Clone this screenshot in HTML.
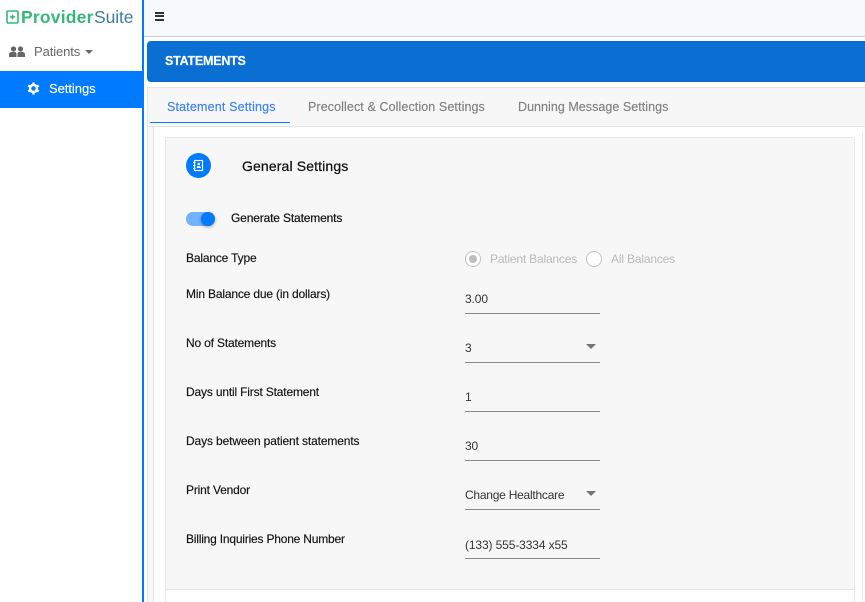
<!DOCTYPE html>
<html><head><meta charset="utf-8"><style>
html,body{margin:0;padding:0;background:#fff}
#r{position:relative;width:865px;height:602px;overflow:hidden;background:#fff;font-family:"Liberation Sans",sans-serif;font-size:12px;color:#212529}
#r div{position:absolute;white-space:nowrap}
.l{left:186px;color:#111;font-size:12px;line-height:14px;letter-spacing:-.17px;-webkit-text-stroke:.15px #111}
.v{left:465px;color:#333;font-size:12px;line-height:14px;letter-spacing:-.12px}
.u{left:465px;width:135px;height:1px;background:#8a8a8a}
.c{left:586px;width:0;height:0;border-left:5.5px solid transparent;border-right:5.5px solid transparent;border-top:5px solid #757575}
.t{font-size:12.5px;line-height:15px;top:100px;-webkit-text-stroke:.15px currentColor}
</style></head><body><div id="r">
<div style="left:142px;top:0;width:2px;height:602px;background:#007bff"></div>
<div style="left:144px;top:0;width:721px;height:36px;background:#f8f9fa"></div>
<div style="left:144px;top:36px;width:721px;height:1px;background:#ccc"></div>
<svg style="position:absolute;left:6px;top:10px" width="14" height="14" viewBox="0 0 14 14"><rect x="1" y="1" width="11" height="12" rx="1" fill="none" stroke="#35b87a" stroke-width="1.6"/><path d="M6.500 4.500v5M4 7h5" stroke="#35b87a" stroke-width="1.400"/></svg>
<div style="left:21px;top:7px;font-size:17.5px;line-height:20px;font-weight:bold;color:#35b87a;letter-spacing:.2px">Provider</div>
<div style="left:94px;top:7px;font-size:17.5px;line-height:20px;color:#3f7d9b;letter-spacing:-.1px">Suite</div>
<svg style="position:absolute;left:9px;top:46px" width="16" height="12" viewBox="0 0 16 12"><circle cx="4.500" cy="3" r="2.600" fill="#666"/><circle cx="11.500" cy="3" r="2.600" fill="#666"/><path d="M0 11V8.500Q0 6 3 6H6Q7.300 6 7.500 8V11ZM8.500 11V8Q8.700 6 10 6H13Q16 6 16 8.500V11Z" fill="#666"/></svg>
<div style="left:34px;top:44px;font-size:13px;line-height:15px;color:#666;letter-spacing:-.1px">Patients</div>
<div style="left:85px;top:50px;width:0;height:0;border-left:4.500px solid transparent;border-right:4.500px solid transparent;border-top:4.500px solid #666"></div>
<div style="left:0;top:71px;width:142px;height:37px;background:#007bff"></div>
<svg style="position:absolute;left:27px;top:82px" width="13" height="13" viewBox="0 0 13 13"><circle cx="6.500" cy="6.500" r="3.500" fill="none" stroke="#fff" stroke-width="2.400"/><path d="M6.500 0.500v2.500M6.500 10v2.500M1.300 3.500l2.200 1.300M9.500 8.200l2.200 1.300M1.300 9.500l2.200-1.300M9.500 4.800l2.200-1.300" stroke="#fff" stroke-width="2.400"/></svg>
<div style="left:49px;top:81px;font-size:13px;line-height:15px;color:#fff;-webkit-text-stroke:.15px #fff;letter-spacing:-.05px">Settings</div>
<div style="left:155px;top:12px;width:9px;height:2px;background:#333"></div>
<div style="left:155px;top:15px;width:9px;height:2px;background:#333"></div>
<div style="left:155px;top:19px;width:9px;height:2px;background:#333"></div>
<div style="left:147px;top:41px;width:718px;height:41px;background:#0a6fd3;border-radius:4px 0 0 4px"></div>
<div style="left:165px;top:54px;font-size:12.5px;line-height:15px;font-weight:bold;color:#fff;letter-spacing:-.22px;-webkit-text-stroke:.2px #fff">STATEMENTS</div>
<div style="left:147px;top:87px;width:718px;height:515px;background:#f7f7f7"></div>
<div style="left:147px;top:87px;width:718px;height:1px;background:#e6e6e6"></div>
<div style="left:147px;top:87px;width:1px;height:515px;background:#e6e6e6"></div>
<div style="left:148px;top:126px;width:717px;height:1px;background:#e4e4e4"></div>
<div style="left:150px;top:122px;width:140px;height:1px;background:#007bff"></div>
<div class="t" style="left:167px;color:#3b82f6;letter-spacing:.17px">Statement Settings</div>
<div class="t" style="left:308px;color:#808080;letter-spacing:.1px">Precollect &amp; Collection Settings</div>
<div class="t" style="left:518px;color:#808080;letter-spacing:.04px">Dunning Message Settings</div>
<div style="left:153px;top:127px;width:710px;height:475px;background:#fff"></div>
<div style="left:153px;top:127px;width:1px;height:475px;background:#e6e6e6"></div>
<div style="left:862px;top:133px;width:1px;height:469px;background:#e8e8e8"></div>
<div style="left:863px;top:127px;width:2px;height:475px;background:#fff"></div>
<div style="left:165px;top:137px;width:688px;height:465px;background:#fff;border:1px solid #e6e6e6;border-radius:2px 2px 0 0"></div>
<div style="left:166px;top:138px;width:688px;height:451px;background:#f7f7f7;border-bottom:1px solid #e6e6e6"></div>
<div style="left:186px;top:153px;width:25px;height:25px;border-radius:50%;background:#007bff"></div>
<svg style="position:absolute;left:192px;top:159px" width="13" height="13" viewBox="0 0 13 13"><rect x="2.500" y="1.500" width="8" height="10" fill="none" stroke="#fff" stroke-width="1.200"/><circle cx="6.700" cy="5" r="1.300" fill="#fff"/><path d="M4.500 9Q4.700 7 6.700 7T8.900 9Z" fill="#fff"/><path d="M1 3.500h2.500M1 6.500h2.500M1 9.500h2.500" stroke="#fff"/></svg>
<div style="left:242px;top:158px;font-size:14px;line-height:16px;color:#111;letter-spacing:.13px;-webkit-text-stroke:.25px #111">General Settings</div>
<div style="left:186px;top:212px;width:29px;height:14px;border-radius:7px;background:#73b2ff"></div>
<div style="left:201px;top:212px;width:14px;height:14px;border-radius:50%;background:#007bff;box-shadow:0 1px 3px rgba(0,0,0,.35)"></div>
<div class="l" style="left:231px;top:211px;letter-spacing:-.15px;-webkit-text-stroke:.2px #111">Generate Statements</div>
<div class="l" style="top:251px">Balance Type</div>
<div style="left:465px;top:251px;width:14px;height:14px;border:1px solid #c4c4c4;border-radius:50%;background:#fff"></div>
<div style="left:469px;top:255px;width:8px;height:8px;border-radius:50%;background:#bdbdbd"></div>
<div style="left:490px;top:252px;font-size:12px;line-height:14px;color:#b9b9b9;letter-spacing:-.19px">Patient Balances</div>
<div style="left:586px;top:251px;width:14px;height:14px;border:1px solid #c4c4c4;border-radius:50%;background:#fff"></div>
<div style="left:611px;top:252px;font-size:12px;line-height:14px;color:#b9b9b9;letter-spacing:-.17px">All Balances</div>
<div class="l" style="top:287px">Min Balance due (in dollars)</div>
<div class="v" style="top:292px">3.00</div><div class="u" style="top:313px"></div>
<div class="l" style="top:336px">No of Statements</div>
<div class="v" style="top:341px">3</div><div class="u" style="top:362px"></div><div class="c" style="top:344px"></div>
<div class="l" style="top:385px">Days until First Statement</div>
<div class="v" style="top:390px">1</div><div class="u" style="top:411px"></div>
<div class="l" style="top:434px;letter-spacing:-.13px">Days between patient statements</div>
<div class="v" style="top:439px">30</div><div class="u" style="top:460px"></div>
<div class="l" style="top:483px">Print Vendor</div>
<div class="v" style="top:488px;letter-spacing:-.24px">Change Healthcare</div><div class="u" style="top:509px"></div><div class="c" style="top:491px"></div>
<div class="l" style="top:532px;letter-spacing:-.2px">Billing Inquiries Phone Number</div>
<div class="v" style="top:538px">(133) 555-3334 x55</div><div class="u" style="top:558px"></div>
</div></body></html>
